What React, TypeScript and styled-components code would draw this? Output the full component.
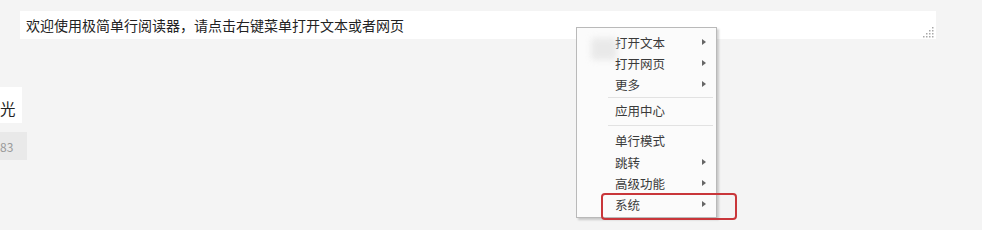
import React from "react";
import styled, { createGlobalStyle } from "styled-components";

const Global = createGlobalStyle`
  html, body { margin: 0; padding: 0; }
  body {
    background: #f4f4f4;
    width: 982px;
    height: 230px;
    overflow: hidden;
    font-family: "Noto Sans CJK SC", "Liberation Sans", sans-serif;
  }
`;

const Page = styled.div`
  position: relative;
  width: 982px;
  height: 230px;
  display: flex;
  flex-direction: column;
  align-items: flex-start;
`;

const ReaderBar = styled.div`
  position: relative;
  margin: 11px 0 0 20px;
  width: 916px;
  height: 28px;
  background: #ffffff;
  display: flex;
  align-items: center;
  padding-left: 6px;
  box-sizing: border-box;
  font-size: 14px;
  color: #222;
`;

const Grip = styled.svg`
  position: absolute;
  right: 2px;
  bottom: 1px;
`;

const SideCard = styled.div<{ $bg: string; $w: number; $h: number; $mt: number; $pt: number }>`
  margin-top: ${(p) => p.$mt}px;
  width: ${(p) => p.$w}px;
  height: ${(p) => p.$h}px;
  box-sizing: border-box;
  padding-top: ${(p) => p.$pt}px;
  background: ${(p) => p.$bg};
  display: flex;
  align-items: center;
  overflow: hidden;
`;

const SideText = styled.span<{ $size: number; $color: string }>`
  font-size: ${(p) => p.$size}px;
  color: ${(p) => p.$color};
  white-space: nowrap;
`;

const Menu = styled.div`
  position: absolute;
  left: 576px;
  top: 27px;
  width: 141px;
  height: 191px;
  box-sizing: border-box;
  background: #fbfbfb;
  border: 1px solid #b9b9b9;
  box-shadow: 2px 2px 2px rgba(0, 0, 0, 0.18);
  padding: 4px 3px 2px 0;
  display: flex;
  flex-direction: column;
`;

const Item = styled.div`
  position: relative;
  height: 21.5px;
  display: flex;
  align-items: center;
  padding-left: 38px;
  font-size: 12.5px;
  color: #3a3a3a;
`;

const Arrow = styled.span`
  position: absolute;
  right: 7px;
  top: 50%;
  margin-top: -3.5px;
  width: 0;
  height: 0;
  border-top: 3.5px solid transparent;
  border-bottom: 3.5px solid transparent;
  border-left: 4px solid #666;
`;

const Separator = styled.div<{ $mt: number; $mb: number }>`
  height: 1px;
  margin: ${(p) => p.$mt}px 0 ${(p) => p.$mb}px 31px;
  background: #e2e2e2;
`;

const GhostIcon = styled.span`
  position: absolute;
  left: 14px;
  top: 6px;
  width: 26px;
  height: 22px;
  background: #e4e4e4;
  border-radius: 3px;
  filter: blur(3px);
  opacity: 0.75;
`;

const Highlight = styled.div`
  position: absolute;
  left: 601px;
  top: 193px;
  width: 136px;
  height: 27px;
  box-sizing: border-box;
  border: 2.5px solid #c9363a;
  border-radius: 4px;
  pointer-events: none;
`;

type Entry =
  | { kind: "item"; label: string; sub?: boolean; icon?: boolean }
  | { kind: "sep"; mt: number; mb: number };

const entries: Entry[] = [
  { kind: "item", label: "打开文本", sub: true, icon: true },
  { kind: "item", label: "打开网页", sub: true },
  { kind: "item", label: "更多", sub: true },
  { kind: "sep", mt: 1.5, mb: 2 },
  { kind: "item", label: "应用中心" },
  { kind: "sep", mt: 4, mb: 4 },
  { kind: "item", label: "单行模式" },
  { kind: "item", label: "跳转", sub: true },
  { kind: "item", label: "高级功能", sub: true },
  { kind: "item", label: "系统", sub: true },
];

const gripDots: [number, number][] = [
  [9, 0],
  [6, 3], [9, 3],
  [3, 6], [6, 6], [9, 6],
  [0, 9], [3, 9], [6, 9], [9, 9],
];

export default function App() {
  return (
    <>
      <Global />
      <Page>
        <ReaderBar>
          欢迎使用极简单行阅读器，请点击右键菜单打开文本或者网页
          <Grip width="11" height="11" viewBox="0 0 11 11">
            {gripDots.map(([x, y], i) => (
              <rect key={i} x={x} y={y} width="1.5" height="1.5" fill="#a8a8a8" />
            ))}
          </Grip>
        </ReaderBar>
        <SideCard $bg="#ffffff" $w={22} $h={36} $mt={48} $pt={5}>
          <SideText $size={15.5} $color="#222">光</SideText>
        </SideCard>
        <SideCard $bg="#e9e9e9" $w={27} $h={28} $mt={9} $pt={0}>
          <SideText $size={12} $color="#9a9a9a">83</SideText>
        </SideCard>

        <Menu>
          {entries.map((e, i) =>
            e.kind === "sep" ? (
              <Separator key={i} $mt={e.mt} $mb={e.mb} />
            ) : (
              <Item key={i}>
                {e.icon && <GhostIcon />}
                {e.label}
                {e.sub && <Arrow />}
              </Item>
            )
          )}
        </Menu>
        <Highlight />
      </Page>
    </>
  );
}
